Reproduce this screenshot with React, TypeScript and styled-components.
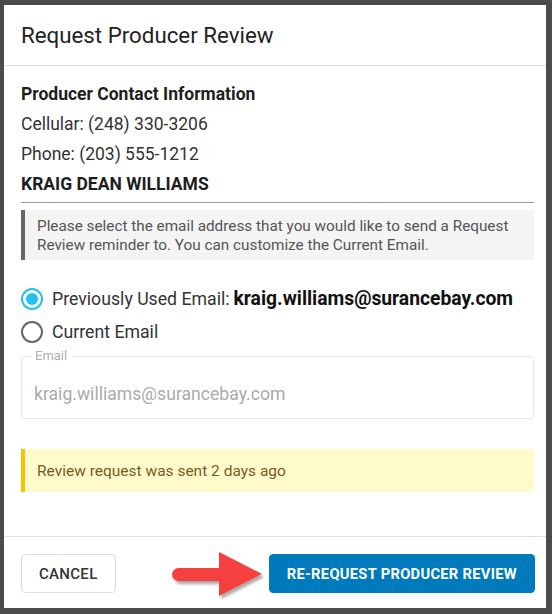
import React from "react";
import styled, {createGlobalStyle} from "styled-components";

const GlobalStyle = createGlobalStyle`
  html, body {
    margin: 0;
    padding: 0;
    background: #4b4b4b;
    font-family: Roboto, "Liberation Sans", Arial, sans-serif;
  }
`;

const Page = styled.div`
  padding: 5px 6px 6px 4px;
  width: 552px;
  height: 614px;
  box-sizing: border-box;
`;

const Dialog = styled.div`
  background: #fff;
  height: 603px;
  display: flex;
  flex-direction: column;
`;

const Header = styled.div`
  height: 60px;
  display: flex;
  align-items: center;
  padding-left: 17px;
  border-bottom: 1px solid #dedede;
  font-size: 22.3px;
  color: #222;
`;

const Body = styled.div`
  flex: 1;
  padding: 13px 12px 0 17px;
  color: #222;
`;

const Line = styled.div<{ bold?: boolean }>`
  font-size: 17.5px;
  line-height: 30px;
  font-weight: ${p => (p.bold ? 700 : 400)};
  color: ${p => (p.bold ? "#1e1e1e" : "#333")};
`;

const Divider = styled.div`
  margin-top: 3px;
  height: 1px;
  background: #9a9a9a;
`;

const InfoBox = styled.div`
  margin-top: 7px;
  background: #f4f4f4;
  border-left: 4px solid #666;
  padding: 7px 12px 5px;
  font-size: 15.3px;
  line-height: 19px;
  color: #555;
`;

const RadioGroup = styled.div`
  margin-top: 22px;
  display: flex;
  flex-direction: column;
`;

const RadioRow = styled.label`
  height: 33px;
  display: flex;
  align-items: center;
  gap: 9px;
  font-size: 17.7px;
  color: #333;
`;

const RadioCircle = styled.span<{ checked?: boolean }>`
  width: 22px;
  height: 22px;
  box-sizing: border-box;
  border-radius: 50%;
  border: 2px solid ${p => (p.checked ? "#22c1f1" : "#666")};
  display: flex;
  align-items: center;
  justify-content: center;
  &::after {
    content: "";
    width: 12px;
    height: 12px;
    border-radius: 50%;
    background: ${p => (p.checked ? "#22c1f1" : "transparent")};
  }
`;

const EmailStrong = styled.span`
  font-weight: 700;
  color: #111;
  font-size: 19.3px;
  margin-left: -5px;
`;

const Field = styled.div`
  position: relative;
  margin-top: 8px;
  height: 63px;
  box-sizing: border-box;
  border: 1px solid #e6e6e6;
  border-radius: 4px;
  padding: 12px 12px 0;
  display: flex;
  align-items: center;
  font-size: 17.6px;
  color: #aaa;
`;

const FieldLabel = styled.span`
  position: absolute;
  top: -8px;
  left: 9px;
  padding: 0 4px;
  background: #fff;
  font-size: 13px;
  line-height: 14px;
  color: #b0b0b0;
`;

const Alert = styled.div`
  margin-top: 30px;
  background: #fffacc;
  border-left: 4px solid #f7c400;
  padding: 12px 12px 11px;
  font-size: 15.5px;
  line-height: 20px;
  color: #7a5a1c;
`;

const Footer = styled.div`
  height: 72px;
  box-sizing: border-box;
  border-top: 1px solid #dedede;
  padding: 2px 11px 0 17px;
  display: flex;
  align-items: center;
`;

const Button = styled.button<{ primary?: boolean }>`
  height: 39px;
  padding: 0 17px;
  border-radius: 4px;
  font-family: Roboto, "Liberation Sans", Arial, sans-serif;
  font-size: ${p => (p.primary ? "14.7px" : "15px")};
  font-weight: ${p => (p.primary ? 700 : 500)};
  letter-spacing: 0.3px;
  text-transform: uppercase;
  border: 1px solid ${p => (p.primary ? "#0079bd" : "#dcdcdc")};
  background: ${p => (p.primary ? "#0079bd" : "#fff")};
  color: ${p => (p.primary ? "#fff" : "#333")};
`;

const Right = styled.div`
  margin-left: auto;
  display: flex;
  align-items: center;
`;

const Arrow = () => (
    <svg width="100" height="52" viewBox="0 0 100 52" style={{marginTop: 3}}>
        <defs>
            <filter id="sh" x="-20%" y="-20%" width="140%" height="150%">
                <feDropShadow dx="2" dy="3" stdDeviation="1.6" floodColor="#000" floodOpacity="0.35"/>
            </filter>
        </defs>
        <g filter="url(#sh)" fill="#f5413f">
            <rect x="3" y="19" width="54" height="13" rx="6.5"/>
            <polygon points="50,3 50,47 93,25"/>
        </g>
    </svg>
);

export default function App() {
    return (
        <Page>
            <GlobalStyle/>
            <Dialog>
                <Header>Request Producer Review</Header>
                <Body>
                    <Line bold>Producer Contact Information</Line>
                    <Line>Cellular: (248) 330-3206</Line>
                    <Line>Phone: (203) 555-1212</Line>
                    <Line bold>KRAIG DEAN WILLIAMS</Line>
                    <Divider/>
                    <InfoBox>
                        Please select the email address that you would like to send a Request
                        Review reminder to. You can customize the Current Email.
                    </InfoBox>
                    <RadioGroup>
                        <RadioRow>
                            <RadioCircle checked/>
                            <span>Previously Used Email:</span>
                            <EmailStrong>kraig.williams@surancebay.com</EmailStrong>
                        </RadioRow>
                        <RadioRow>
                            <RadioCircle/>
                            <span>Current Email</span>
                        </RadioRow>
                    </RadioGroup>
                    <Field>
                        <FieldLabel>Email</FieldLabel>
                        kraig.williams@surancebay.com
                    </Field>
                    <Alert>Review request was sent 2 days ago</Alert>
                </Body>
                <Footer>
                    <Button>Cancel</Button>
                    <Right>
                        <Arrow/>
                        <Button primary>Re-Request Producer Review</Button>
                    </Right>
                </Footer>
            </Dialog>
        </Page>
    );
}
